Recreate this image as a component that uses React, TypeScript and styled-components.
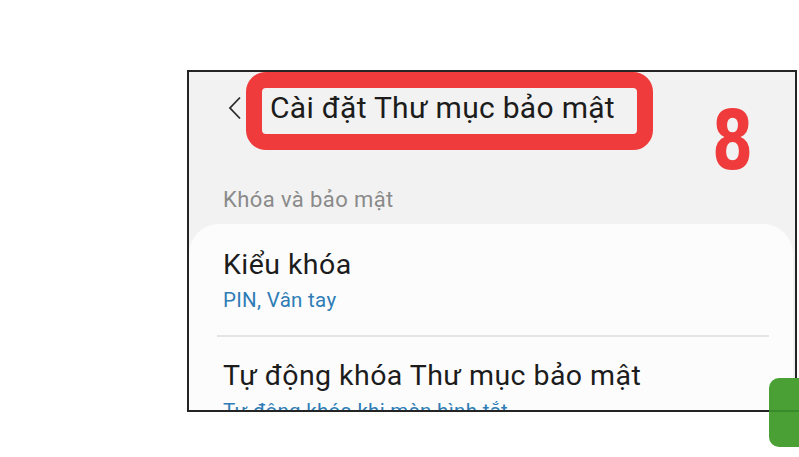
import React from 'react';
import styled, { createGlobalStyle } from 'styled-components';

const GlobalStyle = createGlobalStyle`
  html, body {
    margin: 0;
    padding: 0;
    background: #ffffff;
  }
  body {
    font-family: Roboto, "Noto Sans", "Liberation Sans", sans-serif;
  }
`;

interface SettingItem {
  title: string;
  value: string;
}

const items: SettingItem[] = [
  { title: 'Kiểu khóa', value: 'PIN, Vân tay' },
  { title: 'Tự động khóa Thư mục bảo mật', value: 'Tự động khóa khi màn hình tắt' },
];

const App: React.FC = () => {
  return (
    <>
      <GlobalStyle />
      <Page>
        <Frame>
          <Header>
            <BackIcon width="14" height="24" viewBox="0 0 14 24">
              <polyline points="12,1.5 2,12 12,22.5" fill="none" stroke="#2a2a2a" strokeWidth="1.8" />
            </BackIcon>
            <Highlight>
              <Title>Cài đặt Thư mục bảo mật</Title>
            </Highlight>
          </Header>
          <StepNumber>8</StepNumber>

          <SectionLabel>Khóa và bảo mật</SectionLabel>
          <Card>
            {items.map((item, index) => (
              <React.Fragment key={item.title}>
                {index > 0 && <Divider />}
                <Row $first={index === 0}>
                  <RowTitle>{item.title}</RowTitle>
                  <RowValue>{item.value}</RowValue>
                </Row>
              </React.Fragment>
            ))}
          </Card>
        </Frame>
        <GreenTab />
      </Page>
    </>
  );
};

// 样式组件
const Page = styled.div`
  position: relative;
  width: 799px;
  height: 457px;
  padding: 70px 0 0 187px;
  box-sizing: border-box;
  overflow: hidden;
`;

const Frame = styled.div`
  position: relative;
  width: 610px;
  height: 342px;
  box-sizing: border-box;
  border: 2px solid #242424;
  background-color: #f2f2f2;
  overflow: hidden;
`;

const Header = styled.div`
  display: flex;
  align-items: flex-start;
  height: 78px;
  padding-left: 39px;
`;

const BackIcon = styled.svg`
  margin-top: 24px;
  margin-right: 4px;
  flex-shrink: 0;
`;

const Highlight = styled.div`
  width: 407px;
  height: 78px;
  box-sizing: border-box;
  border: 16px solid #ef3b3b;
  border-radius: 20px;
  padding-left: 8px;
`;

const Title = styled.div`
  font-size: 30px;
  line-height: 40px;
  letter-spacing: 0.3px;
  color: #1c1c1c;
  white-space: nowrap;
`;

const StepNumber = styled.div`
  position: absolute;
  left: 523px;
  top: 28px;
  font-family: "DejaVu Sans", sans-serif;
  font-weight: 700;
  font-size: 82px;
  line-height: 82px;
  color: #ef3b3b;
  transform: scaleX(0.72);
  transform-origin: left top;
`;

const SectionLabel = styled.div`
  margin-top: 37px;
  padding-left: 34px;
  font-size: 22px;
  line-height: 25px;
  letter-spacing: 0.4px;
  color: #8a8a8a;
`;

const Card = styled.div`
  margin: 12px 2px 0 0;
  background-color: #fcfcfc;
  border-radius: 30px 30px 0 0;
  padding-top: 24px;
`;

const Row = styled.div<{ $first: boolean }>`
  padding: ${(p) => (p.$first ? '0' : '22px')} 0 23px 34px;
`;

const RowTitle = styled.div`
  font-size: 28.5px;
  line-height: 34px;
  letter-spacing: 0.45px;
  color: #1c1c1c;
  white-space: nowrap;
`;

const RowValue = styled.div`
  margin-top: 6px;
  font-size: 20.5px;
  line-height: 24px;
  letter-spacing: 0.3px;
  color: #2f7db6;
  white-space: nowrap;
`;

const Divider = styled.div`
  height: 2px;
  margin: 0 24px 0 28px;
  background-color: #e4e4e4;
`;

const GreenTab = styled.div`
  position: absolute;
  left: 769px;
  top: 378px;
  width: 40px;
  height: 69px;
  border-radius: 10px 0 0 10px;
  background: linear-gradient(
    to bottom,
    #4aa035 0,
    #4aa035 32px,
    #3b8a2a 32px,
    #3b8a2a 34px,
    #4aa035 34px
  );
`;

export default App;
